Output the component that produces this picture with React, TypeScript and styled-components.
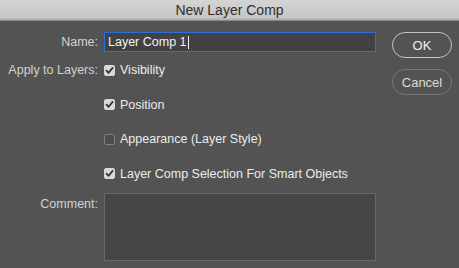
import React from "react";
import styled, { createGlobalStyle } from "styled-components";

const Global = createGlobalStyle`
  html, body { margin: 0; padding: 0; background: #535353; }
  body { font-family: "Liberation Sans", Arial, sans-serif; }
  * { box-sizing: border-box; }
`;

const Window = styled.div`
  width: 459px;
  height: 268px;
  display: flex;
  flex-direction: column;
  background: #535353;
  overflow: hidden;
`;

const TitleBar = styled.div`
  height: 21px;
  flex: none;
  display: flex;
  align-items: center;
  justify-content: center;
  background: linear-gradient(#d4d4d4, #c6c6c6 85%, #b4b4b4 92%, #7c7c7c);
  color: #2e2e2e;
  font-size: 14px;
  padding-bottom: 1px;
`;

const Body = styled.div`
  display: flex;
  padding: 11px 0 0 8px;
  gap: 16px;
`;

const Form = styled.div`
  display: grid;
  grid-template-columns: 90px 272px;
  grid-template-rows: 28px 34.67px 34.67px 34.67px 29px 68px;
  column-gap: 6px;
  align-items: start;
  font-size: 12.5px;
`;

const Label = styled.div<{ $offset?: number }>`
  color: #d2d2d2;
  text-align: right;
  white-space: nowrap;
  height: 20px;
  line-height: 20px;
  margin-top: ${(p) => p.$offset ?? 0}px;
`;

const Cell = styled.div`
  display: flex;
  align-items: center;
  height: 20px;
`;

const TextInput = styled.div`
  width: 272px;
  height: 20px;
  border: 1px solid #2c6fde;
  background: #424242;
  color: #f2f2f2;
  padding-left: 3px;
  display: flex;
  align-items: center;
  font-size: 12.5px;
`;

const Caret = styled.span`
  display: inline-block;
  width: 1px;
  height: 13px;
  background: #f2f2f2;
  margin-left: 1px;
`;

const CheckRow = styled.label`
  display: flex;
  align-items: center;
  gap: 5px;
  color: #ececec;
  white-space: nowrap;
`;

const Box = styled.span<{ $checked: boolean }>`
  width: 11px;
  height: 11px;
  border-radius: 2px;
  display: inline-flex;
  align-items: center;
  justify-content: center;
  background: ${(p) => (p.$checked ? "#d8d8d8" : "#4c4c4c")};
  border: 1px solid ${(p) => (p.$checked ? "#d8d8d8" : "#7e7e7e")};
`;

const CommentBox = styled.div`
  height: 68px;
  width: 272px;
  background: #464646;
  border: 1px solid #6a6a6a;
`;

const Buttons = styled.div`
  display: flex;
  flex-direction: column;
  gap: 11px;
`;

const Button = styled.div<{ $primary?: boolean }>`
  width: 60px;
  height: 26px;
  border-radius: 13px;
  display: flex;
  align-items: center;
  justify-content: center;
  font-size: 13px;
  color: ${(p) => (p.$primary ? "#f0f0f0" : "#dcdcdc")};
  border: 1.5px solid ${(p) => (p.$primary ? "#c4c4c4" : "#767676")};
  background: #535353;
`;

const Check = () => (
  <svg width="9" height="9" viewBox="0 0 9 9">
    <path d="M1.5 4.6 L3.6 6.8 L7.6 1.9" stroke="#333" strokeWidth="1.8" fill="none" strokeLinecap="round" strokeLinejoin="round" />
  </svg>
);

const CheckItem = ({ label, checked }: { label: string; checked: boolean }) => (
  <CheckRow>
    <Box $checked={checked}>{checked && <Check />}</Box>
    {label}
  </CheckRow>
);

export default function App() {
  return (
    <>
      <Global />
      <Window>
        <TitleBar>New Layer Comp</TitleBar>
        <Body>
          <Form>
            <Label>Name:</Label>
            <Cell>
              <TextInput>
                Layer Comp 1<Caret />
              </TextInput>
            </Cell>

            <Label>Apply to Layers:</Label>
            <Cell>
              <CheckItem label="Visibility" checked />
            </Cell>

            <span />
            <Cell>
              <CheckItem label="Position" checked />
            </Cell>

            <span />
            <Cell>
              <CheckItem label="Appearance (Layer Style)" checked={false} />
            </Cell>

            <span />
            <Cell>
              <CheckItem label="Layer Comp Selection For Smart Objects" checked />
            </Cell>

            <Label $offset={1}>Comment:</Label>
            <CommentBox />
          </Form>
          <Buttons>
            <Button $primary>OK</Button>
            <Button>Cancel</Button>
          </Buttons>
        </Body>
      </Window>
    </>
  );
}
